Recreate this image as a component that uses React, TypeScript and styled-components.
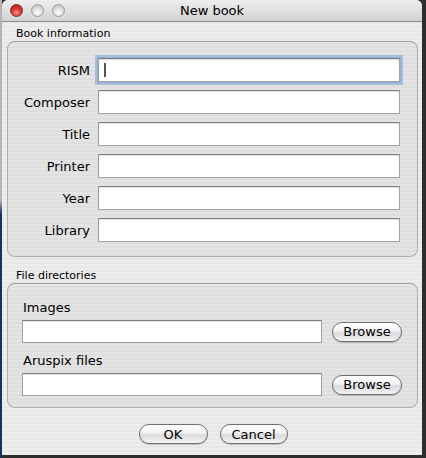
import React from "react";
import styled, { createGlobalStyle } from "styled-components";

const GlobalStyle = createGlobalStyle`
  html, body {
    margin: 0;
    padding: 0;
    background: #2e2e2e;
    font-family: "DejaVu Sans", "Liberation Sans", sans-serif;
  }
`;

const Desktop = styled.div`
  display: flex;
  width: 426px;
  height: 458px;
  overflow: hidden;
`;

const DesktopEdge = styled.div`
  width: 2px;
  flex-shrink: 0;
  background: linear-gradient(to bottom, #b4b4b4 0 200px, #1c2d62 214px);
`;

const Window = styled.div`
  width: 420px;
  height: 455px;
  display: flex;
  flex-direction: column;
  border-radius: 6px 6px 0 0;
  overflow: hidden;
  background: repeating-linear-gradient(to bottom, #ededed 0 2px, #e7e7e7 2px 4px);
`;

const TitleBar = styled.div`
  height: 21px;
  display: grid;
  grid-template-columns: 1fr auto 1fr;
  align-items: center;
  padding: 0 8px;
  background: linear-gradient(to bottom, #eeeeee, #d2d2d2);
  border-bottom: 1px solid #8c8c8c;
`;

const Lights = styled.div`
  display: flex;
  gap: 8px;
  align-items: center;
`;

const Light = styled.span<{ $red?: boolean }>`
  width: 13px;
  height: 13px;
  border-radius: 50%;
  box-sizing: border-box;
  border: 1px solid ${(p) => (p.$red ? "#8e2a2a" : "#9c9c9c")};
  background: ${(p) =>
    p.$red
      ? "radial-gradient(circle at 50% 70%, #f6908a 0, #d83a34 45%, #9c1a16 100%)"
      : "radial-gradient(circle at 50% 70%, #ffffff 0, #dcdcdc 50%, #b4b4b4 100%)"};
`;

const Title = styled.div`
  font-size: 13px;
  color: #000;
`;

const Content = styled.div`
  flex: 1;
  display: flex;
  flex-direction: column;
  padding: 0 4px 0 5px;
`;

const SectionLabel = styled.div<{ $top: number }>`
  font-size: 11px;
  line-height: 15px;
  height: 15px;
  margin-top: ${(p) => p.$top}px;
  padding-left: 9px;
  color: #000;
`;

const GroupBox = styled.div`
  border: 1px solid #aeaeae;
  border-top-color: #9a9a9a;
  border-radius: 8px;
  background: rgba(0, 0, 0, 0.035);
  box-shadow: inset 0 1px 0 rgba(255, 255, 255, 0.35);
`;

const InfoGrid = styled.div`
  display: grid;
  grid-template-columns: 82px 1fr;
  grid-auto-rows: 24px;
  column-gap: 8px;
  row-gap: 8px;
  align-items: center;
  padding: 16px 17px 14px 0;
`;

const FieldLabel = styled.label`
  font-size: 13px;
  text-align: right;
  color: #000;
`;

const TextInput = styled.input<{ $focused?: boolean; $w?: number }>`
  box-sizing: border-box;
  width: ${(p) => (p.$w ? `${p.$w}px` : "100%")};
  height: ${(p) => (p.$w ? 23 : 24)}px;
  border: 1px solid #a2a2a2;
  border-top-color: #7e7e7e;
  background: #fff;
  box-shadow: ${(p) =>
    p.$focused
      ? "0 0 0 1px #8fb1d8, 0 0 0 3px rgba(120, 160, 215, 0.55), inset 0 1px 1px rgba(0,0,0,0.15)"
      : "inset 0 1px 1px rgba(0,0,0,0.12)"};
  outline: none;
  font-size: 13px;
  font-family: inherit;
  padding: 0 4px;
  caret-color: transparent;
`;

const FocusWrap = styled.div`
  position: relative;
  height: 24px;
`;

const Caret = styled.span`
  position: absolute;
  left: 6px;
  top: 5px;
  width: 2px;
  height: 14px;
  background: #555;
`;

const DirBox = styled.div`
  display: flex;
  flex-direction: column;
  gap: 10px;
  padding: 16px 15px 11px 14px;
`;

const DirGroup = styled.div`
  display: flex;
  flex-direction: column;
  gap: 4px;
`;

const DirLabel = styled.div`
  font-size: 13px;
  line-height: 16px;
  padding-left: 1px;
  color: #000;
`;

const DirRow = styled.div`
  display: flex;
  align-items: center;
  gap: 10px;
`;

const PillButton = styled.button<{ $w: number }>`
  box-sizing: border-box;
  width: ${(p) => p.$w}px;
  height: 20px;
  padding: 0;
  border: 1px solid #6f6f6f;
  border-radius: 10px;
  background: linear-gradient(to bottom, #ffffff 0%, #f2f2f2 45%, #dadada 55%, #f4f4f4 100%);
  box-shadow: 0 1px 1px rgba(0, 0, 0, 0.2);
  font-family: inherit;
  font-size: 13px;
  color: #000;
`;

const ButtonBar = styled.div`
  display: flex;
  justify-content: center;
  gap: 12px;
  margin-top: 16px;
  padding-left: 1px;
`;

const fields = ["RISM", "Composer", "Title", "Printer", "Year", "Library"];

export default function App() {
  return (
    <>
      <GlobalStyle />
      <Desktop>
        <DesktopEdge />
        <Window>
          <TitleBar>
            <Lights>
              <Light $red />
              <Light />
              <Light />
            </Lights>
            <Title>New book</Title>
            <span />
          </TitleBar>
          <Content>
            <SectionLabel $top={4}>Book information</SectionLabel>
            <GroupBox>
              <InfoGrid>
                {fields.map((f, i) => (
                  <React.Fragment key={f}>
                    <FieldLabel>{f}</FieldLabel>
                    {i === 0 ? (
                      <FocusWrap>
                        <TextInput $focused />
                        <Caret />
                      </FocusWrap>
                    ) : (
                      <TextInput />
                    )}
                  </React.Fragment>
                ))}
              </InfoGrid>
            </GroupBox>
            <SectionLabel $top={11}>File directories</SectionLabel>
            <GroupBox>
              <DirBox>
                <DirGroup>
                  <DirLabel>Images</DirLabel>
                  <DirRow>
                    <TextInput $w={300} />
                    <PillButton $w={70}>Browse</PillButton>
                  </DirRow>
                </DirGroup>
                <DirGroup>
                  <DirLabel>Aruspix files</DirLabel>
                  <DirRow>
                    <TextInput $w={300} />
                    <PillButton $w={70}>Browse</PillButton>
                  </DirRow>
                </DirGroup>
              </DirBox>
            </GroupBox>
            <ButtonBar>
              <PillButton $w={69}>OK</PillButton>
              <PillButton $w={68}>Cancel</PillButton>
            </ButtonBar>
          </Content>
        </Window>
      </Desktop>
    </>
  );
}
